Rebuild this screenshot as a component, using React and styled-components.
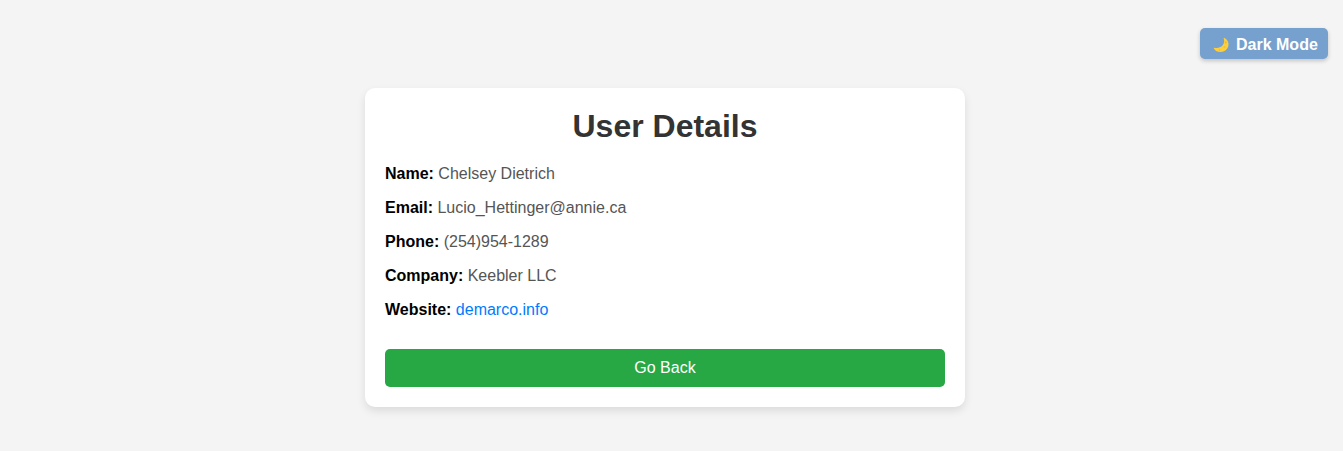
import React from "react";
import styled, { createGlobalStyle } from "styled-components";

const GlobalStyle = createGlobalStyle`
  * { box-sizing: border-box; }
  body {
    margin: 0;
    background: #f4f4f4;
    font-family: Arial, "Liberation Sans", sans-serif;
    font-size: 16px;
    line-height: 18px;
  }
`;

const Page = styled.div`
  min-height: 451px;
  display: flex;
  flex-direction: column;
`;

const TopBar = styled.header`
  display: flex;
  justify-content: flex-end;
  padding: 28px 15px 29px;
`;

const ThemeButton = styled.button`
  display: flex;
  align-items: center;
  width: 128px;
  height: 31px;
  padding: 2px 10px 0 13px;
  border: 0;
  border-radius: 5px;
  background: #76a0cd;
  color: #fff;
  font: bold 16px/18px Arial, "Liberation Sans", sans-serif;
  white-space: nowrap;
  box-shadow: 0 2px 4px rgba(0, 0, 0, 0.2);
  cursor: pointer;
`;

const MoonIcon = styled.svg`
  flex: none;
  width: 16px;
  height: 16px;
  margin-right: 7px;
`;

const Main = styled.main`
  display: flex;
  justify-content: center;
  padding-right: 13px;
`;

const Card = styled.section`
  width: 600px;
  height: 319px;
  padding: 20px;
  border-radius: 10px;
  background: #fff;
  box-shadow: 0 4px 8px rgba(0, 0, 0, 0.1);
`;

const Title = styled.h1`
  margin: 0 0 20px;
  color: #333;
  font-size: 32px;
  line-height: 37px;
  text-align: center;
`;

const Details = styled.div`
  display: flex;
  flex-direction: column;
  gap: 16px;
  margin-bottom: 30px;
`;

const Detail = styled.p`
  margin: 0;
  color: #555;
`;

const Label = styled.strong`
  color: #000;
`;

const WebLink = styled.a`
  color: #007bff;
  text-decoration: none;
`;

const BackButton = styled.button`
  display: block;
  width: 100%;
  height: 38px;
  padding: 10px;
  border: 0;
  border-radius: 5px;
  background: #28a745;
  color: #fff;
  font: 16px/18px Arial, "Liberation Sans", sans-serif;
  cursor: pointer;
`;

const details = [
  ["Name", "Chelsey Dietrich"],
  ["Email", "Lucio_Hettinger@annie.ca"],
  ["Phone", "(254)954-1289"],
  ["Company", "Keebler LLC"],
];

export default function App() {
  return (
    <Page>
      <GlobalStyle />
      <TopBar>
        <ThemeButton>
          <MoonIcon viewBox="0 0 16 16" aria-hidden="true">
            <path
              d="M11.3 .9C14.3 2.3 16 5.2 15.4 8.6C14.7 12.6 11.4 15 7.7 15C4.7 15 2 13.7 .8 11.4C.6 10.9 .9 10.6 1.4 10.7C4.8 11.5 8.2 10.5 10 7.8C11.4 5.7 11.4 3.6 10.7 1.6C10.5 1 10.8 .7 11.3 .9Z"
              fill="#fccf3e"
            />
            <circle cx="12.8" cy="5.5" r=".9" fill="#e9b83b" />
            <circle cx="11.5" cy="10" r="1" fill="#efc03d" />
            <circle cx="6.5" cy="13" r=".8" fill="#e9b83b" />
          </MoonIcon>
          Dark Mode
        </ThemeButton>
      </TopBar>
      <Main>
        <Card>
          <Title>User Details</Title>
          <Details>
            {details.map(([label, value]) => (
              <Detail key={label}>
                <Label>{label}:</Label> {value}
              </Detail>
            ))}
            <Detail>
              <Label>Website:</Label> <WebLink href="#">demarco.info</WebLink>
            </Detail>
          </Details>
          <BackButton>Go Back</BackButton>
        </Card>
      </Main>
    </Page>
  );
}
